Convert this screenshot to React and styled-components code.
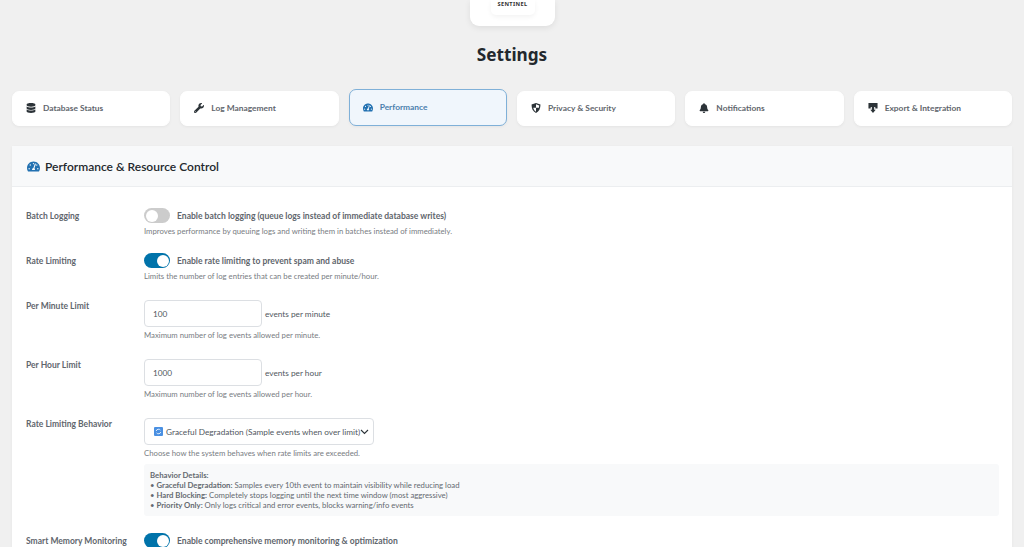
import React from 'react';
import styled, { createGlobalStyle } from 'styled-components';
import { FaDatabase, FaWrench, FaBell, FaTachometerAlt } from 'react-icons/fa';

const GlobalStyle = createGlobalStyle`
  html, body {
    margin: 0;
    height: 547px;
    overflow: hidden;
    background: #f0f0f0;
    font-family: "Lato", "Noto Sans", sans-serif;
    color: #50575e;
  }
`;

const ExportIcon = () => (
  <svg width="10" height="12" viewBox="0 0 11 12" fill="currentColor">
    <path d="M0.5 0.5h10v6H8V4.8H3V6.5H0.5z" />
    <path d="M4.2 4.5h2.6v3.5h1.7L5.5 11.5 2.5 8h1.7z" />
  </svg>
);

const ShieldIcon = () => (
  <svg width="11" height="12" viewBox="0 0 11 12">
    <path d="M5.5 0.4L10.4 2.2C10.4 6.5 9 9.8 5.5 11.6 2 9.8 0.6 6.5 0.6 2.2z" fill="#2c3338" />
    <path d="M5.5 2L9 3.2C9 3.9 8.9 4.8 8.7 5.6H5.5zM5.5 5.6V10C3.8 9 2.9 7.4 2.5 5.6z" fill="#fff" />
  </svg>
);

const SyncIcon = () => (
  <svg width="9" height="9" viewBox="0 0 9 9">
    <rect width="9" height="9" rx="1" fill="#4a90e2" />
    <path d="M2.2 4a2.4 2.4 0 0 1 4.2-.9M6.8 5a2.4 2.4 0 0 1-4.2.9" stroke="#fff" strokeWidth="0.8" fill="none" />
  </svg>
);

const Chevron = () => (
  <svg width="9" height="6" viewBox="0 0 9 6" fill="none" stroke="#2c3338" strokeWidth="1.1">
    <path d="M1 1l3.5 3.5L8 1" />
  </svg>
);

const tabs = [
  { name: 'Database Status', icon: <FaDatabase size={10} /> },
  { name: 'Log Management', icon: <FaWrench size={10} /> },
  { name: 'Performance', icon: <FaTachometerAlt size={11} />, active: true },
  { name: 'Privacy & Security', icon: <ShieldIcon /> },
  { name: 'Notifications', icon: <FaBell size={10} /> },
  { name: 'Export & Integration', icon: <ExportIcon /> },
];

const App = () => (
  <Page>
    <GlobalStyle />
    <LogoCard>
      <LogoInner>SENTINEL</LogoInner>
    </LogoCard>
    <Title>Settings</Title>

    <TabBar>
      {tabs.map((tab) => (
        <Tab key={tab.name} $active={tab.active}>
          <TabIcon $active={tab.active}>{tab.icon}</TabIcon>
          {tab.name}
        </Tab>
      ))}
    </TabBar>

    <Panel>
      <PanelHeader>
        <FaTachometerAlt size={13} color="#2271b1" />
        Performance &amp; Resource Control
      </PanelHeader>
      <PanelBody>
        <Row $height={45}>
          <Label $inline>Batch Logging</Label>
          <Field>
            <ToggleLine>
              <Toggle />
              Enable batch logging (queue logs instead of immediate database writes)
            </ToggleLine>
            <Help>Improves performance by queuing logs and writing them in batches instead of immediately.</Help>
          </Field>
        </Row>
        <Row $height={47}>
          <Label $inline>Rate Limiting</Label>
          <Field>
            <ToggleLine>
              <Toggle $on />
              Enable rate limiting to prevent spam and abuse
            </ToggleLine>
            <Help>Limits the number of log entries that can be created per minute/hour.</Help>
          </Field>
        </Row>
        <Row $height={59}>
          <Label>Per Minute Limit</Label>
          <Field>
            <InputLine>
              <NumberBox>100</NumberBox>
              events per minute
            </InputLine>
            <Help>Maximum number of log events allowed per minute.</Help>
          </Field>
        </Row>
        <Row $height={59}>
          <Label>Per Hour Limit</Label>
          <Field>
            <InputLine>
              <NumberBox>1000</NumberBox>
              events per hour
            </InputLine>
            <Help>Maximum number of log events allowed per hour.</Help>
          </Field>
        </Row>
        <Row $height={115}>
          <Label>Rate Limiting Behavior</Label>
          <Field>
            <SelectBox>
              <SyncIcon />
              <SelectText>Graceful Degradation (Sample events when over limit)</SelectText>
              <Chevron />
            </SelectBox>
            <Help>Choose how the system behaves when rate limits are exceeded.</Help>
            <Details>
              <strong>Behavior Details:</strong><br />
              • <strong>Graceful Degradation:</strong> Samples every 10th event to maintain visibility while reducing load<br />
              • <strong>Hard Blocking:</strong> Completely stops logging until the next time window (most aggressive)<br />
              • <strong>Priority Only:</strong> Only logs critical and error events, blocks warning/info events
            </Details>
          </Field>
        </Row>
        <Row $height={30}>
          <Label $inline>Smart Memory Monitoring</Label>
          <Field>
            <ToggleLine>
              <Toggle $on />
              Enable comprehensive memory monitoring &amp; optimization
            </ToggleLine>
          </Field>
        </Row>
      </PanelBody>
    </Panel>
  </Page>
);

const Page = styled.div`
  display: flex;
  flex-direction: column;
  padding: 0 12px;
  height: 547px;
  overflow: hidden;

  > * {
    flex-shrink: 0;
  }
`;

const LogoCard = styled.div`
  align-self: center;
  width: 85px;
  height: 26px;
  box-sizing: border-box;
  margin-left: 1px;
  background: #fff;
  border-radius: 0 0 9px 9px;
  box-shadow: 0 2px 6px rgba(0, 0, 0, 0.08);
  display: flex;
  justify-content: center;
`;

const LogoInner = styled.div`
  width: 44px;
  height: 15px;
  border-radius: 0 0 5px 5px;
  box-shadow: 0 2px 5px rgba(0, 0, 0, 0.05);
  font-family: "Noto Sans", sans-serif;
  font-size: 5.6px;
  font-weight: 700;
  letter-spacing: 0.4px;
  color: #333;
  text-align: center;
  line-height: 8px;
`;

const Title = styled.h1`
  margin: 17px 0 0;
  height: 48px;
  font-family: "Noto Sans", sans-serif;
  font-size: 17.2px;
  line-height: 24px;
  font-weight: 700;
  color: #23282d;
  text-align: center;
`;

const TabBar = styled.div`
  display: grid;
  grid-template-columns: repeat(6, 1fr);
  gap: 10px;
`;

const Tab = styled.div`
  box-sizing: border-box;
  display: flex;
  align-items: center;
  gap: 7px;
  padding: 0 0 1px 13px;
  border-radius: 7px;
  font-size: 8.4px;
  font-weight: 700;
  background: ${(p) => (p.$active ? '#f0f6fc' : '#fff')};
  color: ${(p) => (p.$active ? '#4a7ead' : '#5f666d')};
  border: ${(p) => (p.$active ? '1px solid #7fb0d8' : '1px solid #fff')};
  box-shadow: 0 1px 3px rgba(0, 0, 0, 0.05);
  margin-top: ${(p) => (p.$active ? '-2px' : '0')};
  height: ${(p) => (p.$active ? '37px' : '35px')};
`;

const TabIcon = styled.span`
  display: flex;
  justify-content: center;
  width: 10px;
  color: ${(p) => (p.$active ? '#2271b1' : '#2c3338')};
`;

const Panel = styled.div`
  margin-top: 20px;
  background: #fff;
  box-shadow: 0 1px 3px rgba(0, 0, 0, 0.05);
`;

const PanelHeader = styled.div`
  height: 41px;
  box-sizing: border-box;
  display: flex;
  align-items: center;
  gap: 5px;
  padding: 1px 0 0 15px;
  background: #f8f9fa;
  border-bottom: 1px solid #eceef0;
  font-size: 12px;
  font-weight: 600;
  color: #23282d;
`;

const PanelBody = styled.div`
  padding: 21px 13px 0 14px;
`;

const Row = styled.div`
  display: flex;
  height: ${(p) => p.$height}px;
`;

const Label = styled.div`
  width: 118px;
  flex-shrink: 0;
  margin-top: ${(p) => (p.$inline ? '3px' : '1px')};
  font-size: 8.5px;
  line-height: 11px;
  font-weight: 700;
  color: #5f666d;
`;

const Field = styled.div`
  flex: 1;
  min-width: 0;
`;

const ToggleLine = styled.div`
  display: flex;
  align-items: center;
  gap: 7px;
  height: 15px;
  font-size: 8.55px;
  font-weight: 700;
  color: #5f666d;
`;

const Toggle = styled.span`
  position: relative;
  display: block;
  width: 26px;
  height: 15px;
  border-radius: 8px;
  background: ${(p) => (p.$on ? '#0073aa' : '#ccc')};

  &::after {
    content: '';
    position: absolute;
    top: 1.5px;
    left: ${(p) => (p.$on ? '12.5px' : '1.5px')};
    width: 12px;
    height: 12px;
    border-radius: 50%;
    background: #fff;
  }
`;

const Help = styled.div`
  margin-top: 3px;
  font-size: 7.75px;
  line-height: 11px;
  color: #787c82;
`;

const InputLine = styled.div`
  display: flex;
  align-items: center;
  gap: 3px;
  font-size: 8.25px;
  color: #50575e;
`;

const NumberBox = styled.div`
  width: 118px;
  height: 27px;
  box-sizing: border-box;
  display: flex;
  align-items: center;
  padding-left: 8px;
  border: 1px solid #dcdfe3;
  border-radius: 4px;
  color: #50575e;
`;

const SelectBox = styled.div`
  width: 230px;
  height: 27px;
  box-sizing: border-box;
  display: flex;
  align-items: center;
  gap: 3px;
  padding: 0 4px 0 9px;
  border: 1px solid #dcdfe3;
  border-radius: 4px;
  font-size: 8.25px;
  color: #50575e;

  svg {
    flex-shrink: 0;
  }
`;

const SelectText = styled.span`
  white-space: nowrap;
  flex: 1;
  min-width: 0;
`;

const Details = styled.div`
  margin-top: 5px;
  height: 52px;
  box-sizing: border-box;
  padding: 6px 6px 0;
  background: #f8f9fa;
  border-radius: 3px;
  font-size: 7.75px;
  line-height: 10.1px;
  color: #646970;
  strong {
    font-weight: 700;
  }
`;

export default App;
